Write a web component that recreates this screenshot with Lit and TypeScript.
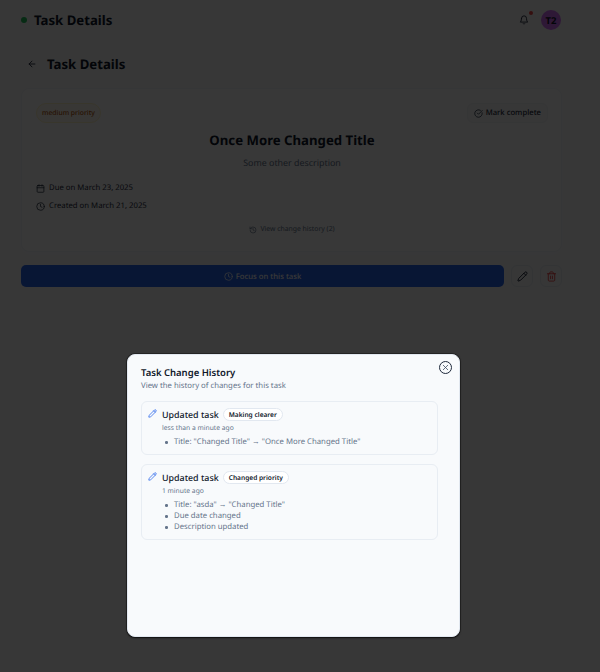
import { LitElement, css, html, svg } from 'lit';
import { customElement } from 'lit/decorators.js';

const icon = (size: number, body: unknown, cls = '') => html`
  <svg class="ic ${cls}" width=${size} height=${size} viewBox="0 0 24 24" fill="none" stroke="currentColor" stroke-width="2" stroke-linecap="round" stroke-linejoin="round">${body}</svg>
`;

const pencil = svg`<path d="M21.17 6.81a2.82 2.82 0 0 0-3.99-3.99L3.84 16.17a2 2 0 0 0-.5.83l-1.32 4.35a.5.5 0 0 0 .62.62l4.35-1.32a2 2 0 0 0 .83-.5z"/><path d="m15 5 4 4"/>`;
const clock = svg`<circle cx="12" cy="12" r="10"/><polyline points="12 6 12 12 16 14"/>`;

@customElement('app-root')
export class AppRoot extends LitElement {
  private change(title: string, tag: string, when: string, items: string[]) {
    return html`
      <div class="entry">
        <div class="entry-head">
          ${icon(9, pencil, 'blue')}
          <span class="entry-title">${title}</span>
          <span class="tag">${tag}</span>
        </div>
        <div class="when">${when}</div>
        <ul>${items.map((i) => html`<li>${i}</li>`)}</ul>
      </div>
    `;
  }

  render() {
    return html`
      <div class="page">
        <header>
          <span class="dot"></span>
          <span class="brand">Task Details</span>
          <span class="spacer"></span>
          <span class="bell">
            ${icon(10, svg`<path d="M6 8a6 6 0 0 1 12 0c0 7 3 9 3 9H3s3-2 3-9"/><path d="M10.3 21a1.94 1.94 0 0 0 3.4 0"/>`)}
            <i></i>
          </span>
          <span class="avatar">T2</span>
        </header>

        <div class="back-row">
          ${icon(10, svg`<path d="m12 19-7-7 7-7"/><path d="M19 12H5"/>`)}
          <h1>Task Details</h1>
        </div>

        <section class="card">
          <div class="card-top">
            <span class="badge">medium priority</span>
            <span class="mark">
              ${icon(9, svg`<path d="M21.8 10A10 10 0 1 1 17 3.34"/><path d="m9 11 3 3L22 4"/>`)}
              Mark complete
            </span>
          </div>
          <h2>Once More Changed Title</h2>
          <p class="desc">Some other description</p>
          <div class="meta">
            ${icon(9, svg`<path d="M8 2v4"/><path d="M16 2v4"/><rect width="18" height="18" x="3" y="4" rx="2"/><path d="M3 10h18"/>`)}
            Due on March 23, 2025
          </div>
          <div class="meta">${icon(9, clock)} Created on March 21, 2025</div>
          <div class="history-link">
            ${icon(8, svg`<path d="M3 12a9 9 0 1 0 9-9 9.75 9.75 0 0 0-6.74 2.74L3 8"/><path d="M3 3v5h5"/><path d="M12 7v5l4 2"/>`)}
            View change history (2)
          </div>
        </section>

        <div class="actions">
          <button class="focus">${icon(9, clock)} Focus on this task</button>
          <button class="square">${icon(11, pencil)}</button>
          <button class="square red">
            ${icon(11, svg`<path d="M3 6h18"/><path d="M19 6v14c0 1-1 2-2 2H7c-1 0-2-1-2-2V6"/><path d="M8 6V4c0-1 1-2 2-2h4c1 0 2 1 2 2v2"/><path d="M10 11v6"/><path d="M14 11v6"/>`)}
          </button>
        </div>
      </div>

      <div class="overlay"></div>

      <div class="dialog">
        <button class="close">${icon(9, svg`<path d="M18 6 6 18"/><path d="m6 6 12 12"/>`)}</button>
        <h3>Task Change History</h3>
        <p class="sub">View the history of changes for this task</p>
        <div class="list">
          ${this.change('Updated task', 'Making clearer', 'less than a minute ago', [
            'Title: "Changed Title" → "Once More Changed Title"',
          ])}
          ${this.change('Updated task', 'Changed priority', '1 minute ago', [
            'Title: "asda" → "Changed Title"',
            'Due date changed',
            'Description updated',
          ])}
        </div>
      </div>
    `;
  }

  static styles = css`
    :host {
      display: block;
      height: 672px;
      position: relative;
      overflow: hidden;
      background: #f9fafb;
      font-family: 'Noto Sans', sans-serif;
      color: #0f172a;
      text-rendering: geometricPrecision;
    }

    .ic {
      flex: none;
      display: block;
    }

    button {
      font-family: inherit;
      text-rendering: inherit;
      border: none;
      padding: 0;
    }

    .page {
      width: 541px;
      padding: 0 38px 0 21px;
    }

    header {
      height: 40px;
      display: flex;
      align-items: center;
    }
    .dot {
      width: 6px;
      height: 6px;
      border-radius: 50%;
      background: #22c55e;
      margin-right: 7px;
    }
    .brand {
      font-size: 13.2px;
      font-weight: 700;
    }
    .spacer {
      flex: 1;
    }
    .bell {
      position: relative;
      margin-right: 12px;
    }
    .bell i {
      position: absolute;
      top: -4px;
      right: -4px;
      width: 4px;
      height: 4px;
      border-radius: 50%;
      background: #ef4444;
    }
    .avatar {
      width: 20px;
      height: 20px;
      border-radius: 50%;
      background: #d36cf5;
      font-size: 9.5px;
      font-weight: 700;
      display: flex;
      align-items: center;
      justify-content: center;
      margin-right: 1px;
    }

    .back-row {
      display: flex;
      align-items: center;
      gap: 10px;
      height: 24px;
      margin-top: 12px;
      padding-left: 6px;
    }
    h1 {
      margin: 0;
      font-size: 13.2px;
      font-weight: 700;
    }

    .card {
      margin-top: 12px;
      height: 164px;
      box-sizing: border-box;
      background: #fff;
      border: 1px solid #f1f5f9;
      border-radius: 8px;
      padding: 14px 13px 14px 14px;
      box-shadow: 0 2px 8px rgba(255, 255, 255, 0.5);
    }
    .card-top {
      display: flex;
      justify-content: space-between;
      align-items: center;
      height: 20px;
    }
    .badge {
      font-size: 6.8px;
      line-height: 10px;
      font-weight: 500;
      color: #b45309;
      background: #fefaf0;
      border: 1px solid #fef3c7;
      border-radius: 10px;
      padding: 4px 5px;
    }
    .mark {
      display: flex;
      align-items: center;
      gap: 3px;
      height: 20px;
      box-sizing: border-box;
      font-size: 7.7px;
      font-weight: 500;
      color: #1e293b;
      background: #f8f9fa;
      border: 1px solid #f1f3f5;
      border-radius: 6px;
      padding: 0 6px;
    }
    h2 {
      margin: 7px 0 0;
      text-align: center;
      font-size: 13.2px;
      font-weight: 700;
      line-height: 20px;
    }
    .desc {
      margin: 5px 0 8px;
      text-align: center;
      font-size: 8.9px;
      line-height: 16px;
      color: #64748b;
    }
    .meta {
      display: flex;
      align-items: center;
      gap: 4px;
      height: 18px;
      font-size: 7.75px;
      color: #1e293b;
    }
    .history-link {
      margin-top: 10px;
      display: flex;
      justify-content: center;
      align-items: center;
      gap: 3px;
      font-size: 6.85px;
      line-height: 10px;
      color: #64748b;
    }

    .actions {
      display: flex;
      align-items: center;
      gap: 7px;
      margin-top: 13px;
    }
    .focus {
      flex: 1;
      height: 22px;
      display: flex;
      align-items: center;
      justify-content: center;
      gap: 3px;
      padding-top: 1px;
      background: #2563eb;
      color: #fff;
      border-radius: 5px;
      font-size: 7.7px;
      font-weight: 500;
    }
    .square {
      width: 22px;
      height: 22px;
      background: #f9fafb;
      border: 1px solid #e7ebf0;
      border-radius: 6px;
      display: flex;
      align-items: center;
      justify-content: center;
      color: #0f172a;
    }
    .square.red {
      color: #ef4444;
    }

    .overlay {
      position: absolute;
      inset: 0;
      background: rgba(0, 0, 0, 0.78);
    }

    .dialog {
      position: absolute;
      left: 127px;
      top: 354px;
      width: 333px;
      height: 283px;
      box-sizing: border-box;
      padding: 11px 13px;
      background: #f8fafc;
      border-radius: 8px;
      border: 1px solid #e2e8f0;
      box-shadow: 0 1px 2px rgba(0, 0, 0, 0.6), 0 0 0 1px rgba(0, 0, 0, 0.3);
    }
    .close {
      position: absolute;
      top: 6px;
      right: 7px;
      width: 13px;
      height: 13px;
      border-radius: 50%;
      background: transparent;
      border: 1px solid #1e293b;
      color: #334155;
      display: flex;
      align-items: center;
      justify-content: center;
    }
    h3 {
      margin: 0;
      font-size: 9.5px;
      font-weight: 600;
      line-height: 14px;
    }
    .sub {
      margin: 0;
      font-size: 7.75px;
      line-height: 13px;
      color: #64748b;
    }
    .list {
      margin-top: 8px;
      display: flex;
      flex-direction: column;
      gap: 9px;
      width: 297px;
    }
    .entry {
      box-sizing: border-box;
      border: 1px solid #e8edf3;
      border-radius: 6px;
      padding: 6px 7px 6px;
    }
    .entry-head {
      display: flex;
      align-items: center;
      height: 13px;
    }
    .entry-head .ic {
      margin-right: 5px;
      margin-top: -3px;
      margin-left: -1px;
    }
    .blue {
      color: #2563eb;
    }
    .entry-title {
      font-size: 8.9px;
      font-weight: 500;
      margin-right: 4px;
    }
    .tag {
      font-size: 6.6px;
      font-weight: 600;
      border: 1px solid #e2e8f0;
      border-radius: 7px;
      padding: 0 5px;
      line-height: 11px;
      background: #fff;
    }
    .when {
      margin: 2px 0 0 13px;
      font-size: 6.73px;
      line-height: 10px;
      color: #64748b;
    }
    ul {
      margin: 4px 0 0 16px;
      padding: 0;
      list-style: none;
      font-size: 7.75px;
      line-height: 11px;
      color: #64748b;
    }
    li {
      display: flex;
      align-items: center;
      gap: 6.5px;
    }
    li::before {
      content: '';
      flex: none;
      width: 2.5px;
      height: 2.5px;
      border-radius: 50%;
      background: #64748b;
    }
  `;
}

declare global {
  interface HTMLElementTagNameMap {
    'app-root': AppRoot;
  }
}
